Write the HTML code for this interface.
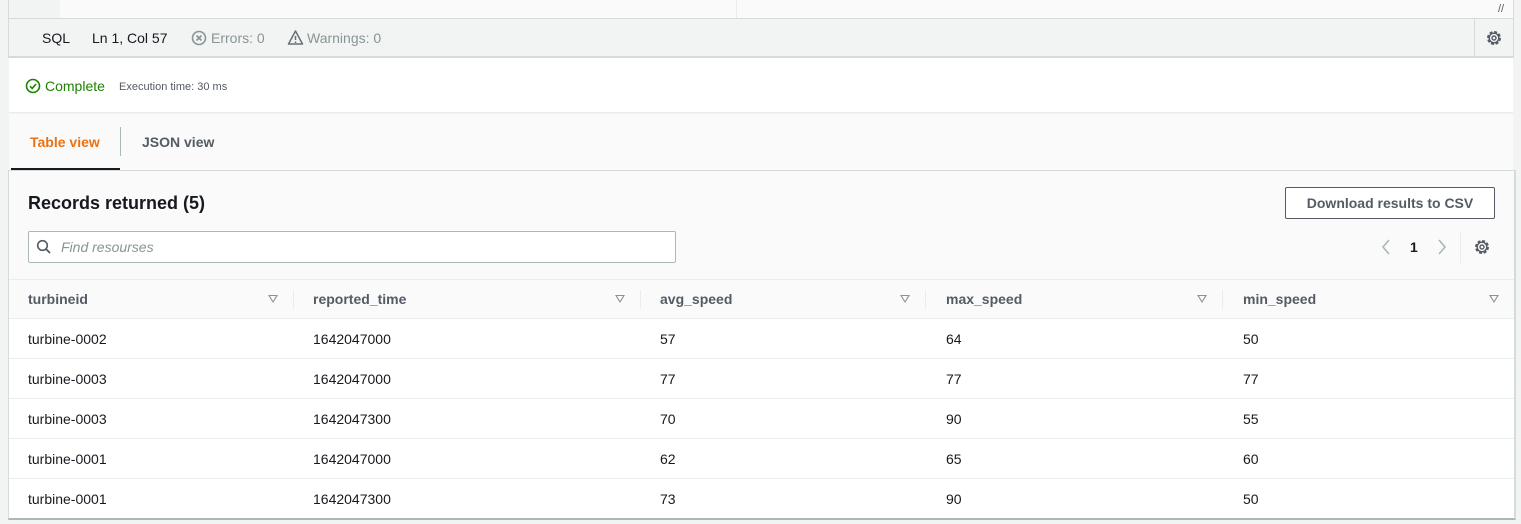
<!DOCTYPE html><html><head><style>
*{box-sizing:border-box;margin:0;padding:0}
body{width:1521px;height:524px;background:#f2f3f3;font-family:"Liberation Sans",Arial,sans-serif;color:#16191f;position:relative;overflow:hidden;font-size:14px}
.a{position:absolute}
.hd{font-weight:bold;color:#545b64;font-size:14px}
.sort{position:absolute;width:0;height:0;border-left:5px solid transparent;border-right:5px solid transparent;border-top:8px solid #879596}
.sort:after{content:"";position:absolute;left:-3px;top:-7px;border-left:3px solid transparent;border-right:3px solid transparent;border-top:5px solid #fafafa}
.row{position:absolute;left:9px;width:1505px;height:40px;background:#fff;border-top:1px solid #eaeded}
.row span{position:absolute;top:12px}
</style></head><body>
<div class="a" style="left:8px;top:0;width:1506px;height:18px;background:#fafafa;border-left:1px solid #d5dbdb;border-right:1px solid #d5dbdb"></div>
<div class="a" style="left:9px;top:0;width:51px;height:18px;background:#f2f3f3"></div>
<div class="a" style="left:736px;top:0;width:1px;height:18px;background:#eaeded"></div>
<div class="a" style="left:1498px;top:3px;color:#545b64;font-size:11px">//</div>
<div class="a" style="left:8px;top:18px;width:1506px;height:40px;background:#f2f3f3;border:1px solid #d5dbdb;border-bottom:2px solid #d5dbdb"></div>
<div class="a" style="left:42px;top:30px;font-size:14px">SQL</div>
<div class="a" style="left:92px;top:30px;font-size:14px">Ln 1, Col 57</div>
<svg class="a" style="left:191px;top:30px" width="16" height="16"><circle cx="8" cy="8" r="6.5" fill="none" stroke="#879596" stroke-width="1.6"/><path d="M5.5 5.5l5 5M10.5 5.5l-5 5" stroke="#879596" stroke-width="1.6"/></svg>
<div class="a" style="left:211px;top:30px;color:#879596">Errors: 0</div>
<svg class="a" style="left:287px;top:29px" width="17" height="17"><path d="M8.5 2L15.5 15H1.5Z" fill="none" stroke="#687078" stroke-width="1.5" stroke-linejoin="round"/><path d="M8.5 7v4M8.5 12.5v1.5" stroke="#687078" stroke-width="1.5"/></svg>
<div class="a" style="left:307px;top:30px;color:#879596">Warnings: 0</div>
<div class="a" style="left:1474px;top:19px;width:1px;height:37px;background:#d5dbdb"></div>
<svg class="a" style="left:1485px;top:29px" width="18" height="18"><circle cx="9" cy="9" r="6" fill="none" stroke="#545b64" stroke-width="2" stroke-dasharray="3 1.7"/><circle cx="9" cy="9" r="4.8" fill="none" stroke="#545b64" stroke-width="1.4"/><circle cx="9" cy="9" r="2" fill="none" stroke="#545b64" stroke-width="1.4"/></svg>
<div class="a" style="left:9px;top:58px;width:1504px;height:55px;background:#fff;border-bottom:1px solid #eaeded"></div>
<svg class="a" style="left:25px;top:78px" width="16" height="16"><circle cx="8" cy="8" r="6.5" fill="none" stroke="#1d8102" stroke-width="1.6"/><path d="M5 8.2l2.2 2.2L11 6" fill="none" stroke="#1d8102" stroke-width="1.6"/></svg>
<div class="a" style="left:45px;top:78px;color:#1d8102;font-size:14px">Complete</div>
<div class="a" style="left:119px;top:81px;color:#545b64;font-size:11px">Execution time: 30 ms</div>
<div class="a" style="left:9px;top:114px;width:1504px;height:56px;background:#fafafa"></div>
<div class="a" style="left:30px;top:134px;color:#ec7211;font-weight:bold;font-size:14px">Table view</div>
<div class="a" style="left:120px;top:127px;width:1px;height:29px;background:#aab7b8"></div>
<div class="a" style="left:142px;top:134px;color:#545b64;font-weight:bold;font-size:14px">JSON view</div>
<div class="a" style="left:11px;top:168px;width:109px;height:2px;background:#16191f"></div>
<div class="a" style="left:8px;top:170px;width:1508px;height:350px;background:#fafafa;border:1px solid #d5dbdb;border-bottom:2px solid #aab7b8;border-right:2px solid #d5dbdb"></div>
<div class="a" style="left:28px;top:193px;font-weight:bold;font-size:18px">Records returned (5)</div>
<div class="a" style="left:1285px;top:187px;width:210px;height:32px;border:1px solid #545b64;border-radius:2px;background:#fff;text-align:center;line-height:30px;font-weight:bold;color:#545b64;font-size:14px">Download results to CSV</div>
<div class="a" style="left:28px;top:231px;width:648px;height:32px;border:1px solid #aab7b8;background:#fff;border-radius:2px"></div>
<svg class="a" style="left:36px;top:239px" width="16" height="16"><circle cx="6.5" cy="6.5" r="4.8" fill="none" stroke="#545b64" stroke-width="1.6"/><path d="M10 10l4 4" stroke="#545b64" stroke-width="1.8"/></svg>
<div class="a" style="left:61px;top:239px;color:#879596;font-style:italic;font-size:14px">Find resourses</div>
<svg class="a" style="left:1380px;top:238px" width="12" height="18"><path d="M9 2L3 9l6 7" fill="none" stroke="#aab7b8" stroke-width="1.6"/></svg>
<div class="a" style="left:1410px;top:239px;font-weight:bold;font-size:14px">1</div>
<svg class="a" style="left:1436px;top:238px" width="12" height="18"><path d="M3 2l6 7-6 7" fill="none" stroke="#aab7b8" stroke-width="1.6"/></svg>
<div class="a" style="left:1460px;top:231px;width:1px;height:32px;background:#eaeded"></div>
<svg class="a" style="left:1473px;top:238px" width="18" height="18"><circle cx="9" cy="9" r="6" fill="none" stroke="#545b64" stroke-width="2" stroke-dasharray="3 1.7"/><circle cx="9" cy="9" r="4.8" fill="none" stroke="#545b64" stroke-width="1.4"/><circle cx="9" cy="9" r="2" fill="none" stroke="#545b64" stroke-width="1.4"/></svg>
<div class="a" style="left:9px;top:279px;width:1505px;height:1px;background:#eaeded"></div>
<div class="a hd" style="left:28px;top:291px">turbineid</div><div class="sort" style="left:268px;top:295px"></div><div class="a" style="left:293px;top:290px;width:1px;height:19px;background:#eaeded"></div>
<div class="a hd" style="left:313px;top:291px">reported_time</div><div class="sort" style="left:615px;top:295px"></div><div class="a" style="left:640px;top:290px;width:1px;height:19px;background:#eaeded"></div>
<div class="a hd" style="left:660px;top:291px">avg_speed</div><div class="sort" style="left:900px;top:295px"></div><div class="a" style="left:925px;top:290px;width:1px;height:19px;background:#eaeded"></div>
<div class="a hd" style="left:946px;top:291px">max_speed</div><div class="sort" style="left:1197px;top:295px"></div><div class="a" style="left:1222px;top:290px;width:1px;height:19px;background:#eaeded"></div>
<div class="a hd" style="left:1243px;top:291px">min_speed</div><div class="sort" style="left:1489px;top:295px"></div>
<div class="row" style="top:318px"><span style="left:19px">turbine-0002</span><span style="left:304px">1642047000</span><span style="left:651px">57</span><span style="left:937px">64</span><span style="left:1234px">50</span></div>
<div class="row" style="top:358px"><span style="left:19px">turbine-0003</span><span style="left:304px">1642047000</span><span style="left:651px">77</span><span style="left:937px">77</span><span style="left:1234px">77</span></div>
<div class="row" style="top:398px"><span style="left:19px">turbine-0003</span><span style="left:304px">1642047300</span><span style="left:651px">70</span><span style="left:937px">90</span><span style="left:1234px">55</span></div>
<div class="row" style="top:438px"><span style="left:19px">turbine-0001</span><span style="left:304px">1642047000</span><span style="left:651px">62</span><span style="left:937px">65</span><span style="left:1234px">60</span></div>
<div class="row" style="top:478px;height:40px"><span style="left:19px">turbine-0001</span><span style="left:304px">1642047300</span><span style="left:651px">73</span><span style="left:937px">90</span><span style="left:1234px">50</span></div>
</body></html>
